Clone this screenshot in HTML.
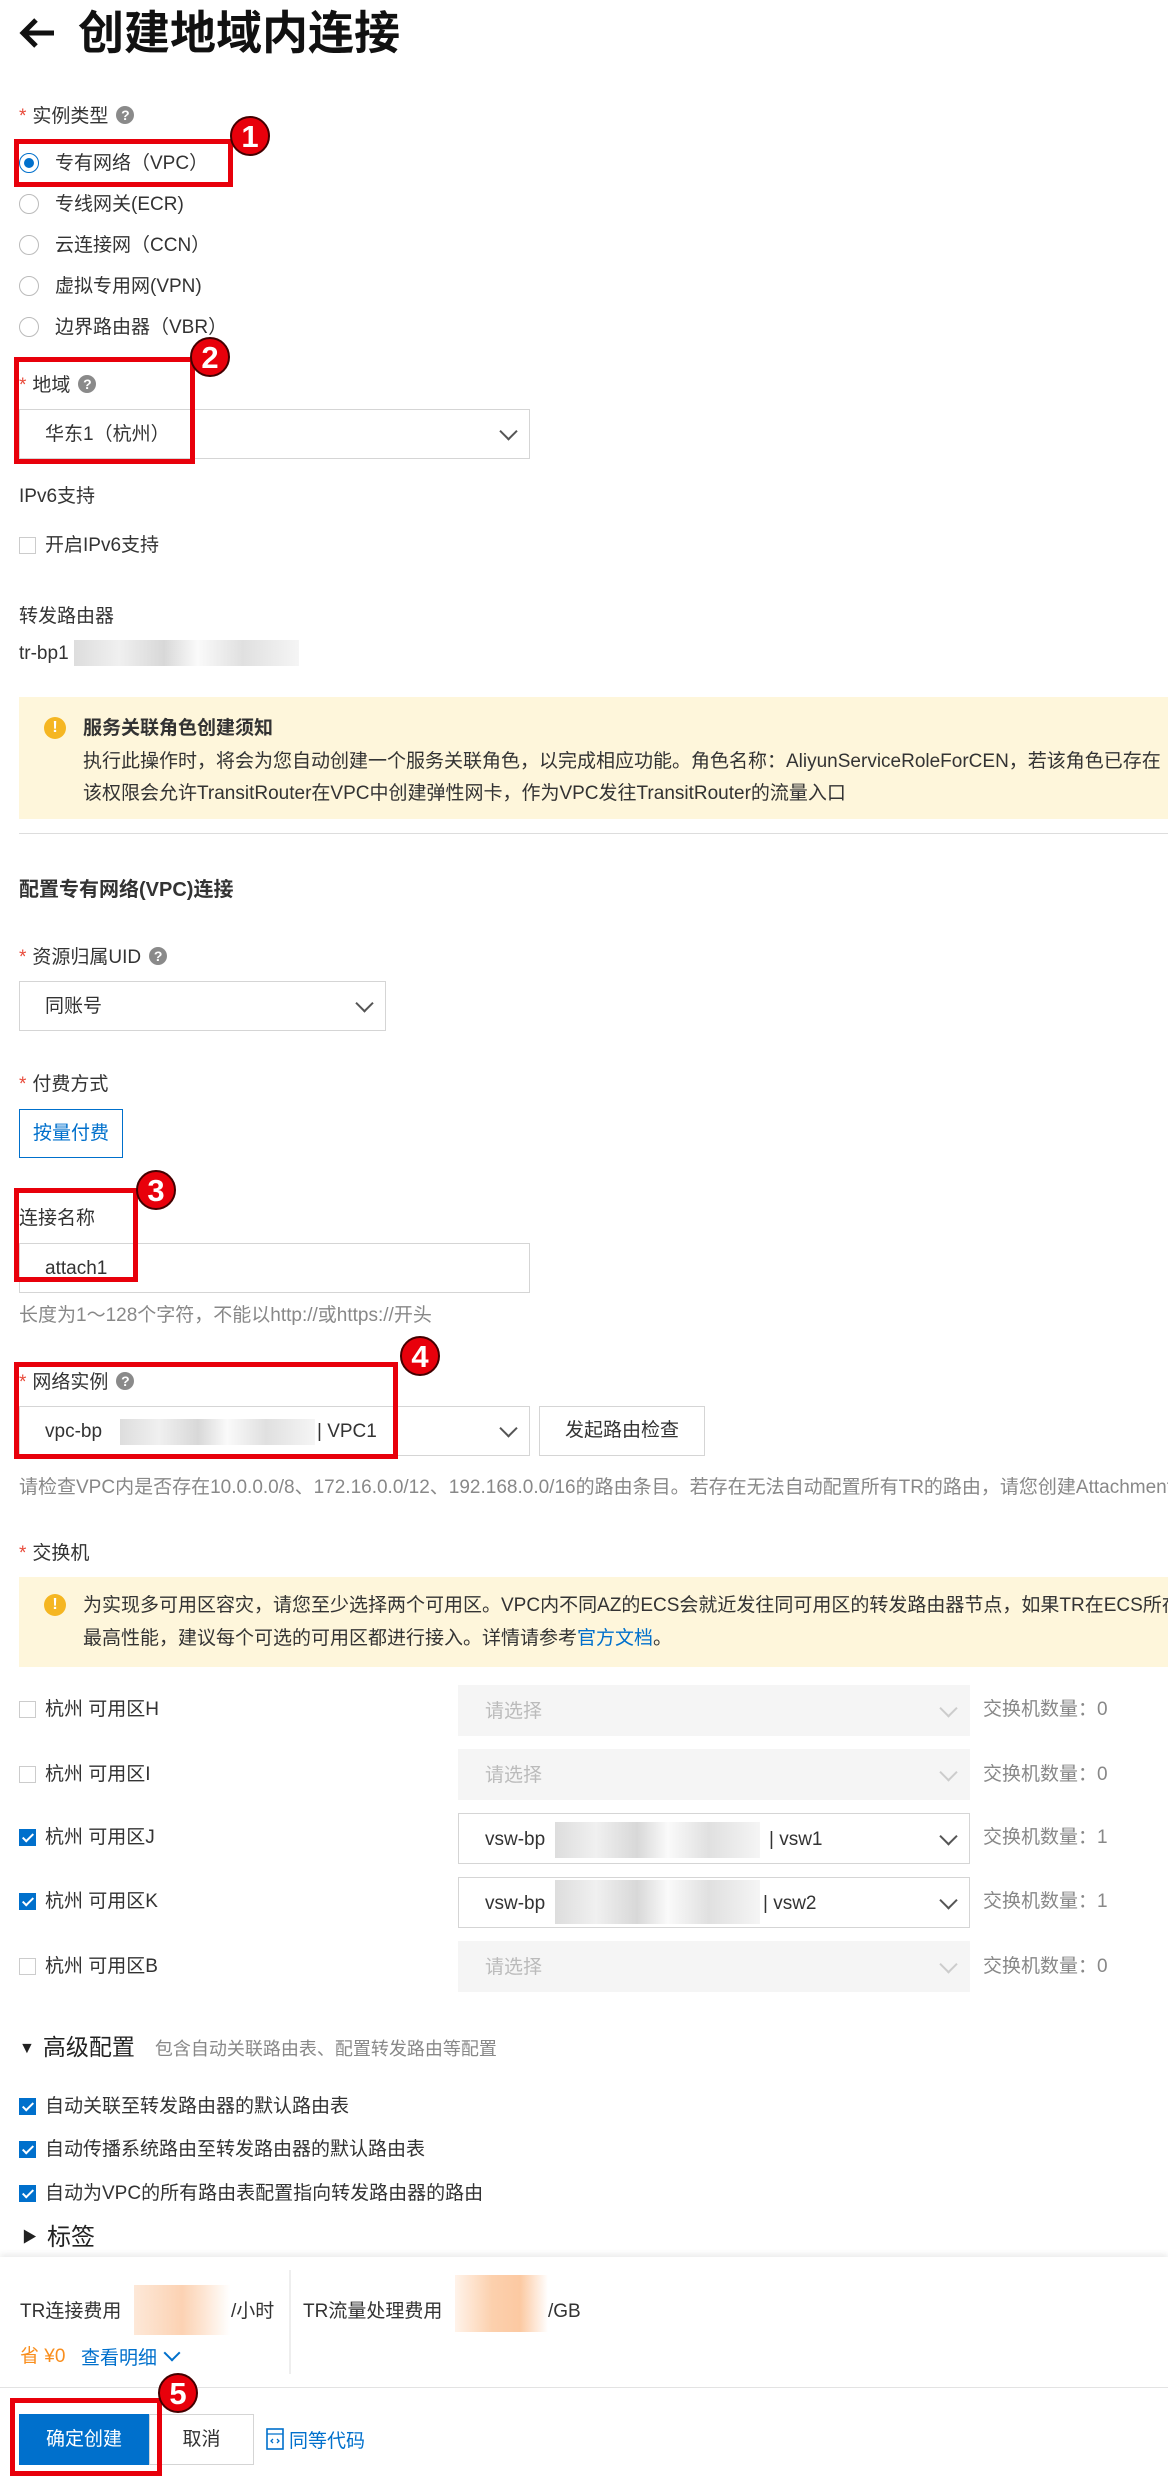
<!DOCTYPE html>
<html><head><meta charset="utf-8">
<style>
html,body{margin:0;padding:0}
body{width:1168px;height:2478px;position:relative;overflow:hidden;background:#fff;font-family:"Liberation Sans","Noto Sans CJK SC",sans-serif;color:#333;font-size:19px}
.a{position:absolute;white-space:nowrap;line-height:1}
.req{color:#e84a3a;margin-right:6px}
.q{display:inline-block;width:18px;height:18px;border-radius:50%;background:#8a8a8a;color:#fff;font-size:14px;line-height:18px;text-align:center;font-weight:bold;vertical-align:2px;margin-left:8px}
.radio{position:absolute;width:20px;height:20px;border:1px solid #bbb;border-radius:50%;box-sizing:border-box;background:#fff}
.radio.on{border-color:#0070cc}
.radio.on:after{content:"";position:absolute;left:4px;top:4px;width:10px;height:10px;border-radius:50%;background:#0070cc}
.cb{position:absolute;width:17px;height:17px;border:1px solid #ccc;box-sizing:border-box;background:#fff}
.cb.on{background:#0070cc;border-color:#0070cc}
.cb.on:after{content:"";position:absolute;left:5px;top:1px;width:4px;height:9px;border:solid #fff;border-width:0 2px 2px 0;transform:rotate(45deg)}
.sel{position:absolute;border:1px solid #d5d5d5;box-sizing:border-box;background:#fff}
.sel.dis{background:#f5f5f5;border-color:#f5f5f5}
.chev{position:absolute;right:14px;top:50%;width:11px;height:11px;border:solid #555;border-width:0 2px 2px 0;transform:translateY(-70%) rotate(45deg)}
.dis .chev{border-color:#ccc}
.red{position:absolute;border:5px solid #e8000b;box-sizing:border-box}
.badge{position:absolute;width:40px;height:40px;border-radius:50%;background:#e8000b;color:#fff;font-weight:bold;font-size:31px;line-height:37px;text-align:center;border:2px solid #400;box-sizing:border-box}
.blur{position:absolute;background:linear-gradient(90deg,#ddd,#f0f0f0 20%,#d8d8d8 40%,#fafafa 55%,#e0e0e0 75%,#f5f5f5)}
.gray{color:#888}
.note{position:absolute;left:19px;width:1160px;background:#fef6db}
.ic{position:absolute;width:22px;height:22px;border-radius:50%;background:#f5b622;color:#fff;font-weight:bold;font-size:16px;line-height:22px;text-align:center}
</style></head><body>

<div class="a" style="left:18px;top:10px;font-size:46px;color:#111;font-weight:bold">
<svg width="40" height="36" viewBox="0 0 40 36" style="vertical-align:-2px;margin-right:20px"><path d="M36 18H6M18 5L5 18l13 13" fill="none" stroke="#111" stroke-width="5"/></svg>创建地域内连接</div>

<div class="a" style="left:19px;top:106px"><span class="req">*</span>实例类型<span class="q">?</span></div>
<div class="radio on" style="left:19px;top:153px"></div><div class="a" style="left:55px;top:154px">专有网络（VPC）</div>
<div class="radio" style="left:19px;top:194px"></div><div class="a" style="left:55px;top:195px">专线网关(ECR)</div>
<div class="radio" style="left:19px;top:235px"></div><div class="a" style="left:55px;top:236px">云连接网（CCN）</div>
<div class="radio" style="left:19px;top:276px"></div><div class="a" style="left:55px;top:277px">虚拟专用网(VPN)</div>
<div class="radio" style="left:19px;top:317px"></div><div class="a" style="left:55px;top:318px">边界路由器（VBR）</div>
<div class="red" style="left:14px;top:139px;width:219px;height:48px"></div>
<div class="badge" style="left:230px;top:116px">1</div>

<div class="a" style="left:19px;top:375px"><span class="req">*</span>地域<span class="q">?</span></div>
<div class="sel" style="left:19px;top:409px;width:511px;height:50px"><div class="a" style="left:25px;top:15px">华东1（杭州）</div><div class="chev"></div></div>
<div class="red" style="left:14px;top:357px;width:181px;height:107px"></div>
<div class="badge" style="left:190px;top:337px">2</div>

<div class="a" style="left:19px;top:487px">IPv6支持</div>
<div class="cb" style="left:19px;top:537px"></div><div class="a" style="left:45px;top:536px">开启IPv6支持</div>
<div class="a" style="left:19px;top:607px">转发路由器</div>
<div class="a" style="left:19px;top:644px">tr-bp1</div><div class="blur" style="left:74px;top:640px;width:225px;height:26px"></div>

<div class="note" style="top:697px;height:122px">
<div class="ic" style="left:25px;top:20px">!</div>
<div class="a" style="left:64px;top:22px;font-weight:bold">服务关联角色创建须知</div>
<div class="a" style="left:64px;top:55px">执行此操作时，将会为您自动创建一个服务关联角色，以完成相应功能。角色名称：AliyunServiceRoleForCEN，若该角色已存在</div>
<div class="a" style="left:64px;top:87px">该权限会允许TransitRouter在VPC中创建弹性网卡，作为VPC发往TransitRouter的流量入口</div>
</div>
<div style="position:absolute;left:19px;top:833px;width:1160px;height:1px;background:#ddd"></div>

<div class="a" style="left:19px;top:880px;font-weight:bold;font-size:20px">配置专有网络(VPC)连接</div>
<div class="a" style="left:19px;top:947px"><span class="req">*</span>资源归属UID<span class="q">?</span></div>
<div class="sel" style="left:19px;top:981px;width:367px;height:50px"><div class="a" style="left:25px;top:15px">同账号</div><div class="chev"></div></div>
<div class="a" style="left:19px;top:1075px"><span class="req">*</span>付费方式</div>
<div class="a" style="left:19px;top:1109px;width:104px;height:49px;border:1px solid #0070cc;box-sizing:border-box;color:#0070cc;text-align:center;line-height:47px">按量付费</div>

<div class="a" style="left:19px;top:1209px">连接名称</div>
<div class="sel" style="left:19px;top:1243px;width:511px;height:50px"><div class="a" style="left:25px;top:15px">attach1</div></div>
<div class="red" style="left:14px;top:1188px;width:124px;height:94px"></div>
<div class="badge" style="left:136px;top:1170px">3</div>
<div class="a gray" style="left:19px;top:1306px">长度为1～128个字符，不能以http://或https://开头</div>

<div class="a" style="left:19px;top:1372px"><span class="req">*</span>网络实例<span class="q">?</span></div>
<div class="sel" style="left:19px;top:1406px;width:511px;height:50px"><div class="a" style="left:25px;top:15px">vpc-bp</div><div class="blur" style="left:100px;top:12px;width:195px;height:26px"></div><div class="a" style="left:297px;top:15px">| VPC1</div><div class="chev"></div></div>
<div class="a" style="left:539px;top:1406px;width:166px;height:50px;border:1px solid #d5d5d5;box-sizing:border-box;text-align:center;line-height:48px">发起路由检查</div>
<div class="red" style="left:14px;top:1362px;width:384px;height:97px"></div>
<div class="badge" style="left:400px;top:1336px">4</div>
<div class="a gray" style="left:19px;top:1478px">请检查VPC内是否存在10.0.0.0/8、172.16.0.0/12、192.168.0.0/16的路由条目。若存在无法自动配置所有TR的路由，请您创建Attachment</div>

<div class="a" style="left:19px;top:1544px"><span class="req">*</span>交换机</div>
<div class="note" style="top:1577px;height:90px">
<div class="ic" style="left:25px;top:17px">!</div>
<div class="a" style="left:64px;top:19px">为实现多可用区容灾，请您至少选择两个可用区。VPC内不同AZ的ECS会就近发往同可用区的转发路由器节点，如果TR在ECS所在</div>
<div class="a" style="left:64px;top:52px">最高性能，建议每个可选的可用区都进行接入。详情请参考<span style="color:#0070cc">官方文档</span>。</div>
</div>

<div class="cb" style="left:19px;top:1701px"></div><div class="a" style="left:45px;top:1700px">杭州 可用区H</div>
<div class="sel dis" style="left:458px;top:1685px;width:512px;height:51px"><div class="a" style="left:26px;top:16px;color:#bbb">请选择</div><div class="chev"></div></div>
<div class="a gray" style="left:983px;top:1700px">交换机数量：0</div>

<div class="cb" style="left:19px;top:1766px"></div><div class="a" style="left:45px;top:1765px">杭州 可用区I</div>
<div class="sel dis" style="left:458px;top:1749px;width:512px;height:51px"><div class="a" style="left:26px;top:16px;color:#bbb">请选择</div><div class="chev"></div></div>
<div class="a gray" style="left:983px;top:1765px">交换机数量：0</div>

<div class="cb on" style="left:19px;top:1829px"></div><div class="a" style="left:45px;top:1828px">杭州 可用区J</div>
<div class="sel" style="left:458px;top:1813px;width:512px;height:51px"><div class="a" style="left:26px;top:16px">vsw-bp</div><div class="blur" style="left:96px;top:8px;width:205px;height:36px"></div><div class="a" style="left:310px;top:16px">| vsw1</div><div class="chev"></div></div>
<div class="a gray" style="left:983px;top:1828px">交换机数量：1</div>

<div class="cb on" style="left:19px;top:1893px"></div><div class="a" style="left:45px;top:1892px">杭州 可用区K</div>
<div class="sel" style="left:458px;top:1877px;width:512px;height:51px"><div class="a" style="left:26px;top:16px">vsw-bp</div><div class="blur" style="left:96px;top:2px;width:205px;height:44px"></div><div class="a" style="left:304px;top:16px">| vsw2</div><div class="chev"></div></div>
<div class="a gray" style="left:983px;top:1892px">交换机数量：1</div>

<div class="cb" style="left:19px;top:1958px"></div><div class="a" style="left:45px;top:1957px">杭州 可用区B</div>
<div class="sel dis" style="left:458px;top:1941px;width:512px;height:51px"><div class="a" style="left:26px;top:16px;color:#bbb">请选择</div><div class="chev"></div></div>
<div class="a gray" style="left:983px;top:1957px">交换机数量：0</div>

<div class="a" style="left:19px;top:2036px;font-size:23px;color:#222"><span style="font-size:16px;margin-right:8px;vertical-align:2px">▼</span>高级配置<span class="gray" style="font-size:18px;margin-left:20px">包含自动关联路由表、配置转发路由等配置</span></div>
<div class="cb on" style="left:19px;top:2098px"></div><div class="a" style="left:45px;top:2097px">自动关联至转发路由器的默认路由表</div>
<div class="cb on" style="left:19px;top:2141px"></div><div class="a" style="left:45px;top:2140px">自动传播系统路由至转发路由器的默认路由表</div>
<div class="cb on" style="left:19px;top:2185px"></div><div class="a" style="left:45px;top:2184px">自动为VPC的所有路由表配置指向转发路由器的路由</div>
<div class="a" style="left:22px;top:2226px;font-size:24px;color:#222"><span style="font-size:15px;margin-right:10px;vertical-align:3px">▶</span>标签</div>

<div style="position:absolute;left:0;top:2257px;width:1168px;height:221px;background:#fff;box-shadow:0 -3px 6px rgba(0,0,0,.08)"></div>
<div class="a" style="left:20px;top:2302px">TR连接费用</div>
<div class="blur" style="left:134px;top:2285px;width:96px;height:50px;background:linear-gradient(90deg,#fde8d8,#fcd2b3 50%,#fde3cf 70%,#fff)"></div>
<div class="a" style="left:231px;top:2302px">/小时</div>
<div style="position:absolute;left:289px;top:2270px;width:2px;height:104px;background:#eee"></div>
<div class="a" style="left:303px;top:2302px">TR流量处理费用</div>
<div class="blur" style="left:455px;top:2275px;width:93px;height:57px;background:linear-gradient(90deg,#fff3ea,#fcd0ad 40%,#fcc9a2 70%,#fff)"></div>
<div class="a" style="left:548px;top:2302px">/GB</div>
<div class="a" style="left:20px;top:2347px;color:#f98e1d">省 ¥0</div>
<div class="a" style="left:81px;top:2347px;color:#0070cc">查看明细 <span style="display:inline-block;width:10px;height:10px;border:solid #0070cc;border-width:0 2px 2px 0;transform:rotate(45deg);vertical-align:5px;margin-left:4px"></span></div>
<div style="position:absolute;left:0;top:2387px;width:1168px;height:1px;background:#e3e3e3"></div>
<div class="a" style="left:19px;top:2414px;width:130px;height:51px;background:#0070cc;color:#fff;text-align:center;line-height:51px">确定创建</div>
<div class="a" style="left:149px;top:2414px;width:105px;height:51px;border:1px solid #d5d5d5;box-sizing:border-box;text-align:center;line-height:49px">取消</div>
<div class="a" style="left:266px;top:2428px;color:#0070cc"><svg width="18" height="22" viewBox="0 0 18 22" style="vertical-align:-3px;margin-right:5px"><rect x="1" y="1" width="16" height="20" fill="none" stroke="#0070cc" stroke-width="1.6"/><path d="M1 6h16M7 11l-2 2 2 2M11 11l2 2-2 2" fill="none" stroke="#0070cc" stroke-width="1.3"/></svg>同等代码</div>
<div class="red" style="left:10px;top:2398px;width:152px;height:78px"></div>
<div class="badge" style="left:158px;top:2373px">5</div>
</body></html>
